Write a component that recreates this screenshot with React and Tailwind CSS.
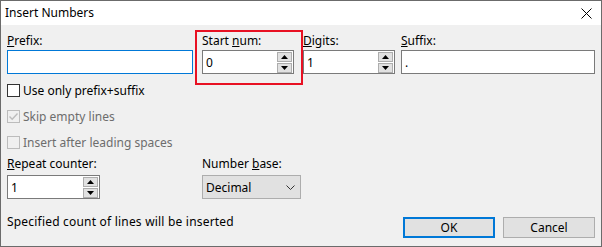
import React from "react";

const font = { fontFamily: '"Noto Sans", "Segoe UI", sans-serif' };

function Spinner() {
  return (
    <div className="flex flex-col gap-px">
      <div className="flex h-[10px] w-[15px] items-center justify-center border border-[#adadad] bg-[#e1e1e1]">
        <svg width="7" height="4" viewBox="0 0 7 4">
          <polygon points="3.5,0 7,4 0,4" fill="#000" />
        </svg>
      </div>
      <div className="flex h-[10px] w-[15px] items-center justify-center border border-[#adadad] bg-[#e1e1e1]">
        <svg width="7" height="4" viewBox="0 0 7 4">
          <polygon points="0,0 7,0 3.5,4" fill="#000" />
        </svg>
      </div>
    </div>
  );
}

function NumBox({ value, w }) {
  return (
    <div
      className={`flex h-[24px] items-center justify-between border border-[#7a7a7a] bg-white pl-[3px] pr-[1px] ${w}`}
    >
      <span>{value}</span>
      <Spinner />
    </div>
  );
}

function Check({ checked, disabled, label }) {
  return (
    <div className="flex h-[13px] items-center">
      <div
        className={`flex h-[13px] w-[13px] items-center justify-center border ${
          disabled ? "border-[#bcbcbc] bg-[#f0f0f0]" : "border-[#333333] bg-white"
        }`}
      >
        {checked && (
          <svg width="11" height="11" viewBox="0 0 11 11">
            <path d="M1.5 5.5 L4.2 8.2 L9.5 2.5" stroke="#bcbcbc" strokeWidth="1.4" fill="none" />
          </svg>
        )}
      </div>
      <span className={`ml-[3px] ${disabled ? "text-[#6d6d6d]" : "text-black"}`}>{label}</span>
    </div>
  );
}

export default function App() {
  return (
    <div
      className="relative flex h-[247px] w-[602px] flex-col border border-[#6b6b6b] bg-[#f0f0f0] text-[12px] leading-[15px] text-black"
      style={font}
    >
      {/* title bar */}
      <div className="flex h-[24px] shrink-0 items-center justify-between bg-white pl-[4px] pr-[9px]">
        <span className="mt-[-1px]">Insert Numbers</span>
        <svg width="11" height="11" viewBox="0 0 11 11">
          <path d="M0.5 0.5 L10.5 10.5 M10.5 0.5 L0.5 10.5" stroke="#000" strokeWidth="1" />
        </svg>
      </div>

      <div className="flex flex-col px-[6px]">
        {/* top row */}
        <div className="mt-[8px] flex">
          <div className="flex w-[186px] flex-col">
            <span>
              <u>P</u>refix:
            </span>
            <div className="mt-[2px] h-[24px] border border-[#0078d7] bg-white" />
          </div>
          <div className="ml-[9px] flex w-[92px] flex-col">
            <span>
              Start <u>n</u>um:
            </span>
            <div className="mt-[2px]">
              <NumBox value="0" w="w-[92px]" />
            </div>
          </div>
          <div className="ml-[9px] flex w-[92px] flex-col">
            <span>
              <u>D</u>igits:
            </span>
            <div className="mt-[2px]">
              <NumBox value="1" w="w-[92px]" />
            </div>
          </div>
          <div className="ml-[6px] flex w-[194px] flex-col">
            <span>
              <u>S</u>uffix:
            </span>
            <div className="mt-[2px] flex h-[24px] items-center border border-[#7a7a7a] bg-white pl-[3px]">
              .
            </div>
          </div>
        </div>

        {/* checkboxes */}
        <div className="mt-[10px] flex flex-col gap-[13px]">
          <Check label="Use only prefix+suffix" />
          <Check label="Skip empty lines" checked disabled />
          <Check label="Insert after leading spaces" disabled />
        </div>

        {/* repeat / base row */}
        <div className="mt-[7px] flex">
          <div className="flex w-[93px] flex-col">
            <span>
              <u>R</u>epeat counter:
            </span>
            <div className="mt-[4px]">
              <NumBox value="1" w="w-[93px]" />
            </div>
          </div>
          <div className="ml-[102px] flex w-[99px] flex-col">
            <span>
              Number <u>b</u>ase:
            </span>
            <div className="mt-[4px] flex h-[24px] items-center justify-between border border-[#adadad] bg-[#e1e1e1] pl-[3px] pr-[5px]">
              <span>Decimal</span>
              <svg width="9" height="5" viewBox="0 0 9 5">
                <path d="M0.5 0.5 L4.5 4.5 L8.5 0.5" stroke="#333" strokeWidth="1" fill="none" />
              </svg>
            </div>
          </div>
        </div>

        {/* bottom row */}
        <div className="mt-[15px] flex items-start justify-between">
          <span className="tracking-[0.2px]">Specified count of lines will be inserted</span>
          <div className="mt-[3px] flex gap-[8px]">
            <div className="flex h-[21px] w-[92px] items-center justify-center border-2 border-[#0078d7] bg-[#e1e1e1]">
              OK
            </div>
            <div className="flex h-[21px] w-[92px] items-center justify-center border border-[#adadad] bg-[#e1e1e1]">
              Cancel
            </div>
          </div>
        </div>
      </div>

      {/* red annotation box */}
      <div className="absolute left-[194px] top-[29px] h-[55px] w-[108px] border-2 border-[#e81123]" />
    </div>
  );
}
